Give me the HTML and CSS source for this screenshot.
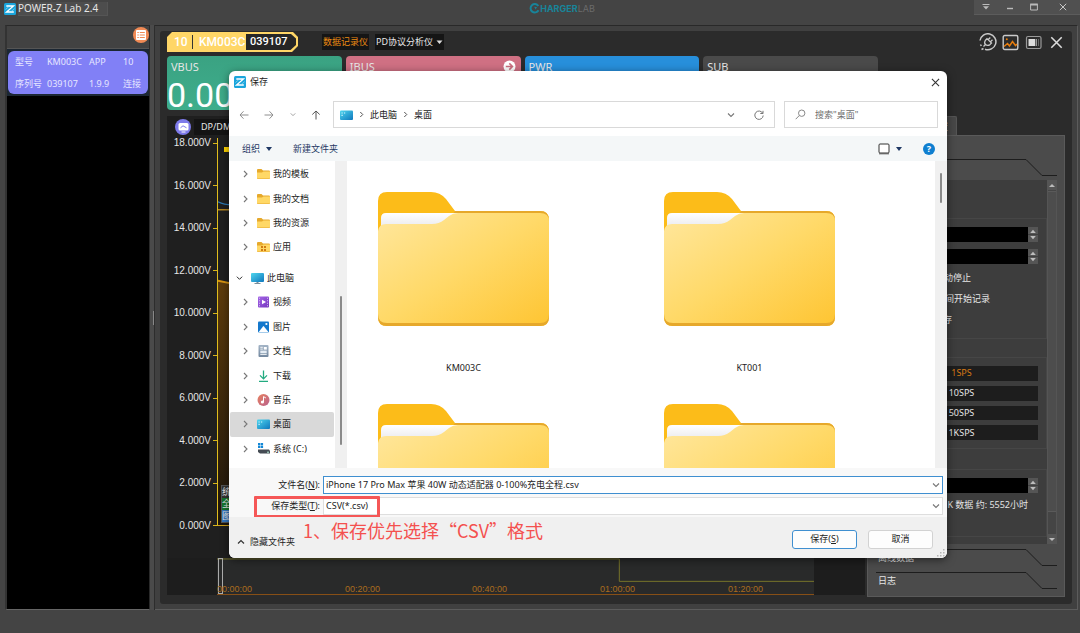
FILE: index.html
```html
<!DOCTYPE html>
<html lang="zh-CN">
<head>
<meta charset="utf-8">
<meta name="viewport" content="width=device-width, initial-scale=1">
<title>POWER-Z Lab 2.4</title>
<link rel="stylesheet" href="styles.css">
</head>
<body>
<svg class="defs" width="0" height="0" aria-hidden="true">
  <defs>
    <linearGradient id="g-front" x1="0" y1="0" x2="1" y2="1"><stop offset="0" stop-color="#ffe79e"/><stop offset=".5" stop-color="#ffd968"/><stop offset="1" stop-color="#fec533"/></linearGradient>
    <linearGradient id="g-paper" x1="0" y1="0" x2="0" y2="1"><stop offset="0" stop-color="#fff"/><stop offset=".5" stop-color="#f1f1f3"/><stop offset="1" stop-color="#e4e4ea"/></linearGradient>
    <linearGradient id="g-blue" x1="0" y1="0" x2="1" y2="1"><stop offset="0" stop-color="#4fd6ee"/><stop offset="1" stop-color="#0f77bd"/></linearGradient>
    <linearGradient id="g-purple" x1="0" y1="0" x2="1" y2="1"><stop offset="0" stop-color="#a566e8"/><stop offset="1" stop-color="#7436bd"/></linearGradient>
    <linearGradient id="g-music" x1="0" y1="0" x2="1" y2="1"><stop offset="0" stop-color="#e8825f"/><stop offset="1" stop-color="#b9618d"/></linearGradient>
    <linearGradient id="g-doc" x1="0" y1="0" x2="0" y2="1"><stop offset="0" stop-color="#a3b4c6"/><stop offset="1" stop-color="#73889f"/></linearGradient>
    <symbol id="z-logo" viewBox="0 0 12 12"><rect width="12" height="12" rx="1.5" fill="#1aa5dc"/><path d="M2.3 3h7.2L2.5 9h7.3" fill="none" stroke="#fff" stroke-width="1.3"/><path d="M1.5 6.5 5 3.4M7 8.7l3.6-3" stroke="#aee3f7" stroke-width=".6"/></symbol>
    <symbol id="big-folder" viewBox="0 0 171 134">
      <path d="M0 9Q0 0 9 0H53Q62 0 68 7L77 19H162Q171 19 171 28V125Q171 134 162 134H9Q0 134 0 125Z" fill="#fcbc19"/>
      <path d="M77 19H162Q171 19 171 28V125Q171 134 162 134H9Q0 134 0 125V110H160V22H75Z" fill="#e6a82b"/>
      <path d="M3 40V26Q3 21 8 21H80V40Z" fill="url(#g-paper)"/>
      <path d="M0 39Q1 32 8 32H54Q61 32 66 28L71 24Q75 21 80 21H162Q171 21 171 29V122Q171 131 162 131H9Q0 131 0 122Z" fill="url(#g-front)"/>
    </symbol>
    <symbol id="folder" viewBox="0 0 13 12"><path d="M0 2Q0 1 1 1H4.5L6 2.5H11.8Q13 2.5 13 3.6V10Q13 11 12 11H1Q0 11 0 10Z" fill="#e6a92c"/><path d="M0 4.6H5L6.5 3.5H13V9.6Q13 10.6 12 10.6H1Q0 10.6 0 9.6Z" fill="#ffd866"/></symbol>
    <symbol id="apps" viewBox="0 0 13 12"><use href="#folder"/><path d="M4 5h2v2H4zM7 5h2v2H7zM4 8h2v2H4zM7 8h2v2H7z" fill="#d17b13"/></symbol>
    <symbol id="pc" viewBox="0 0 13 12"><rect y="1" width="13" height="9" rx="1" fill="url(#g-blue)"/><path d="M5.5 10h2v1h2v1h-6v-1h2z" fill="#7a8f9d"/></symbol>
    <symbol id="desktop" viewBox="0 0 13 12"><rect y="1.5" width="13" height="9.5" rx="1" fill="url(#g-blue)"/><path d="M1.5 3.4h1.2v1.2H1.5zM1.5 5.8h1.2V7H1.5zM4 3.4h1.2v1.2H4z" fill="#d7f6ff"/></symbol>
    <symbol id="video" viewBox="0 0 13 12"><rect x="1" y=".5" width="11" height="11" rx="1" fill="url(#g-purple)"/><path d="M2 1.7h1v1H2zM2 4.2h1v1H2zM2 6.7h1v1H2zM2 9.2h1v1H2zM10 1.7h1v1h-1zM10 4.2h1v1h-1zM10 6.7h1v1h-1zM10 9.2h1v1h-1z" fill="#d9bff5"/><path d="M5 3.8 9 6 5 8.2z" fill="#fff"/></symbol>
    <symbol id="image" viewBox="0 0 13 12"><rect x="1" y=".5" width="11" height="11" rx="1" fill="#1478cc"/><path d="M1.5 11.3 6 5.4Q6.5 4.8 7 5.4L11.6 11.3z" fill="#fff"/><circle cx="9.4" cy="3" r="1.1" fill="#fff"/></symbol>
    <symbol id="doc" viewBox="0 0 13 12"><rect x="1.5" y="0" width="10" height="12" rx="1" fill="url(#g-doc)"/><path d="M3.3 2.3h2.5M3.3 4.1h2.5M3.3 9.4h6.4" stroke="#fff" stroke-width=".9"/><rect x="6.8" y="2" width="3" height="2.6" fill="#fff"/><rect x="3.3" y="5.6" width="6.4" height="2.6" fill="#e5edf5"/></symbol>
    <symbol id="down" viewBox="0 0 13 12"><path d="M6.5.5V8.6M3 5.4l3.5 3.5L10 5.4M2 11.3H11" fill="none" stroke="#22ab80" stroke-width="1.3"/></symbol>
    <symbol id="music" viewBox="0 0 13 12"><circle cx="6.5" cy="6" r="6" fill="url(#g-music)"/><circle cx="5.4" cy="8" r="1.6" fill="#fff"/><path d="M6.5 8V2.6L8.9 4" fill="none" stroke="#fff"/></symbol>
    <symbol id="disk" viewBox="0 0 13 12"><path d="M1 0h2.3v2.3H1zM3.8 0h2.3v2.3H3.8zM1 2.8h2.3v2.3H1zM3.8 2.8h2.3v2.3H3.8z" fill="#1387d6"/><path d="M1 6.500h11l1 1.500v2.500H3L1 9z" fill="#454c54"/><path d="M10 9.200h2" stroke="#b9f3da"/></symbol>
    <symbol id="chev" viewBox="0 0 6 8"><path d="M1.5 1l3 3-3 3" fill="none" stroke="currentColor" stroke-width="1.1"/></symbol>
    <symbol id="vee" viewBox="0 0 8 6"><path d="M1 1.5l3 3 3-3" fill="none" stroke="currentColor" stroke-width="1.1"/></symbol>
    <symbol id="cross" viewBox="0 0 10 10"><path d="M1 1l8 8M9 1l-8 8" stroke="currentColor" stroke-width="1.2"/></symbol>
    <symbol id="spin" viewBox="0 0 10 15"><rect width="10" height="15" fill="#555"/><path d="M2.2 6 5 2.8 7.800 6zM2.200 9 5 12.200 7.800 9z" fill="#bdbdbd"/><path d="M0 7.500h10" stroke="#333" stroke-width=".6"/></symbol>
  </defs>
</svg>

<div class="app">
  <header class="titlebar">
    <div class="app-name"><svg width="12" height="12"><use href="#z-logo"/></svg><h1>POWER-Z Lab 2.4</h1></div>
    <div class="brand"><svg width="11" height="11" viewBox="0 0 11 11"><path d="M9.300 3A4.200 4.200 0 1 0 9.500 7.200" fill="none" stroke="#18849a" stroke-width="2"/><path d="M5.200 3.700 8 3.900 6.600 6.500" fill="#18849a"/></svg><span><b>HARGER</b>LAB</span></div>
    <div class="win-buttons">
      <button aria-label="菜单"><svg width="8" height="8" viewBox="0 0 8 8"><path d="M.5 1.500h7" stroke="#bbb"/><path d="M1 3.200h6L4 6.500z" fill="#bbb"/></svg></button>
      <button aria-label="最小化"><svg width="8" height="8" viewBox="0 0 8 8"><path d="M1 5.500h6" stroke="#bbb" stroke-width="1.400"/></svg></button>
      <button aria-label="最大化"><svg width="8" height="8" viewBox="0 0 8 8"><path d="M.6 1.500h6.800v5.500H.6z" fill="none" stroke="#bbb"/><path d="M.2 1.500h7.600" stroke="#bbb" stroke-width="2"/></svg></button>
      <button aria-label="关闭"><svg width="8" height="8"><use href="#cross"/></svg></button>
    </div>
  </header>

  <div class="workspace">
    <aside class="sidebar">
      <div class="side-head">
        <button class="round list-btn" aria-label="设备列表"><svg width="10" height="10" viewBox="0 0 10 10"><rect width="10" height="10" rx="1" fill="#fff"/><path d="M1.300 2.500h1.500M3.800 2.500h5M1.300 5h1.500M3.800 5h5M1.300 7.500h1.500M3.800 7.500h5" stroke="#f08a55"/></svg></button>
      </div>
      <div class="device-wrap">
        <div class="device">
          <span>型号</span><span>KM003C</span><span>APP</span><span>10</span>
          <span>序列号</span><span>039107</span><span>1.9.9</span><span>连接</span>
        </div>
      </div>
    </aside>
    <div class="splitter"></div>

    <main class="frame">
      <section class="panel">
        <div class="panel-head">
          <div class="badge">
            <svg class="badge-shape" viewBox="0 0 131 20" preserveAspectRatio="none"><path d="M5 0H126L131 5V14L125 20H0V5Z" fill="#ffd667"/><path d="M79 2H124L129 6.500V13L123.500 18H79Z" fill="#262626"/></svg>
            <span class="badge-id">10</span><span class="badge-model">KM003C</span><span class="badge-serial">039107</span>
          </div>
          <button class="dark-btn on">数据记录仪</button>
          <button class="dark-btn">PD协议分析仪<svg width="7" height="5" viewBox="0 0 7 5"><path d="M.5.500h6L3.500 4z" fill="#ddd"/></svg></button>
          <div class="tools">
            <button aria-label="连接"><svg width="18" height="18" viewBox="0 0 18 18" fill="none" stroke="#c9c9c9" stroke-width="1.500"><path d="M1 7.500A8 8 0 1 1 6 16.200M4.500 15.500 2.500 16.500M1.500 11.500l.8 1.500"/><path d="M4.500 13.500 6.500 11.500M6.300 7.500Q4.800 10 6.500 11.500T10.800 11.800L12.500 10 8 5.600ZM9.300 6.500 11.300 4.500M11.500 8.700 13.500 6.700" stroke-width="1.300"/></svg></button>
            <button aria-label="图表"><svg width="17" height="17" viewBox="0 0 17 17" fill="none"><rect x="1.200" y="1.500" width="14.600" height="14" rx="1.500" stroke="#c9c9c9" stroke-width="1.400"/><path d="M2 12.500 5.500 9.500 7.500 12 10.500 7.500 13.500 11.500 15 10" stroke="#e87d0d" stroke-width="1.500"/><circle cx="4.800" cy="5.200" r="1" fill="#e87d0d"/></svg></button>
            <button aria-label="视图"><svg width="17" height="17" viewBox="0 0 17 17"><rect x="1.500" y="2.500" width="14.500" height="12" rx="1.500" fill="none" stroke="#999" stroke-width="1.200"/><rect x="3.500" y="5" width="6.500" height="7" fill="#ddd"/><path d="M10.500 5h1.500v7h-1.500z" fill="#999"/><path d="M13 5h1v7h-1z" fill="#666"/></svg></button>
            <button aria-label="关闭面板"><svg width="13" height="13"><use href="#cross"/></svg></button>
          </div>
        </div>

        <div class="cards">
          <article class="card vbus"><h2>VBUS</h2><p>0.00</p></article>
          <article class="card ibus"><h2>IBUS</h2><svg width="13" height="13" viewBox="0 0 13 13"><circle cx="6.500" cy="6.500" r="6" fill="#fff"/><path d="M2.800 6.500h6M6.300 3.400l3.200 3.100-3.200 3.100" fill="none" stroke="#c96d7e" stroke-width="1.500"/></svg></article>
          <article class="card pwr"><h2>PWR</h2></article>
          <article class="card sub"><h2>SUB</h2></article>
        </div>

        <div class="content">
          <section class="chart">
            <div class="chart-bar">
              <button class="round wave-btn" aria-label="曲线"><svg width="11" height="11" viewBox="0 0 11 11"><rect x=".5" y="1" width="10" height="7.500" rx="1.500" fill="#fff"/><path d="M2.500 5.800 5 3.800 8.500 5.800" fill="none" stroke="#7e7bea"/><path d="M3.500 10h4" stroke="#fff"/></svg></button>
              <button class="dark-btn dp">DP/DM</button>
            </div>
            <div class="plot-row">
              <ol class="axis">
                <li>18.000V</li><li>16.000V</li><li>14.000V</li><li>12.000V</li><li>10.000V</li><li>8.000V</li><li>6.000V</li><li>4.000V</li><li>2.000V</li><li>0.000V</li>
              </ol>
              <div class="plot">
                <svg class="traces" viewBox="0 0 598 388" preserveAspectRatio="none"><defs><linearGradient id="g-fill" x1="0" y1="0" x2="0" y2="1"><stop offset="0" stop-color="#5e3c0b"/><stop offset="1" stop-color="#1e160c"/></linearGradient></defs><path d="M0 143 14 146 598 146V388H0Z" fill="url(#g-fill)"/><path d="M0 143 14 146 H598" fill="none" stroke="#d99511" stroke-width="2"/><path d="M0 72H598" stroke="#b48522" stroke-width="1.500"/><path d="M0 64Q6 67 14 67H598" fill="none" stroke="#2b78b5" stroke-width="1.200"/><path d="M6 9h6v5H6z" fill="#ffd400"/></svg>
                <div class="tags"><span>统</span><span class="green">全</span><span class="blue">图</span></div>
              </div>
            </div>
            <div class="overview">
              <div class="overview-plot">
                <svg class="traces" viewBox="0 0 598 37" preserveAspectRatio="none"><path d="M0 1H403V24H598" fill="none" stroke="#77742a" vector-effect="non-scaling-stroke"/></svg>
                <span class="handle"></span>
                <div class="times"><span>00:00:00</span><span>00:20:00</span><span>00:40:00</span><span>01:00:00</span><span>01:20:00</span></div>
              </div>
            </div>
          </section>

          <section class="settings">
            <div class="tab">设置</div>
            <div class="settings-body">
              <div class="fold"><svg viewBox="0 0 32 17" width="32" height="17"><path d="M0 .5 H1L17 16.500H32" fill="none" stroke="#1d1d1d"/></svg></div>
              <div class="scroll">
                <div class="groups">
                  <div class="group first">
                    <div class="spin-row"><input type="text" aria-label="时长"><svg width="10" height="15"><use href="#spin"/></svg></div>
                    <div class="spin-row"><input type="text" aria-label="间隔"><svg width="10" height="15"><use href="#spin"/></svg></div>
                    <label class="check"><input type="checkbox">自动停止</label>
                    <label class="check mid"><input type="checkbox">时间开始记录</label>
                    <label class="check short"><input type="checkbox">保存</label>
                  </div>
                  <div class="group rates">
                    <button class="on">1SPS</button><button>10SPS</button><button>50SPS</button><button>1KSPS</button>
                  </div>
                  <div class="group last">
                    <div class="spin-row"><input type="text" aria-label="缓存"><svg width="10" height="15"><use href="#spin"/></svg></div>
                    <p>K 数据 约: 5552小时</p>
                  </div>
                </div>
                <div class="bar"><i class="arrow"></i><i class="thumb"></i><i class="arrow down"></i></div>
              </div>
              <div class="fold closed"><span>离线数据</span><svg viewBox="0 0 32 17" width="32" height="17"><path d="M0 .5 H1L17 16.500H32" fill="none" stroke="#1d1d1d"/></svg></div>
              <div class="fold closed"><span>日志</span><svg viewBox="0 0 32 17" width="32" height="17"><path d="M0 .5 H1L17 16.500H32" fill="none" stroke="#1d1d1d"/></svg></div>
            </div>
          </section>
        </div>
      </section>
    </main>
  </div>
</div>

<div class="dialog" role="dialog" aria-labelledby="dlg-title">
  <div class="dlg-title"><svg width="12" height="12"><use href="#z-logo"/></svg><h2 id="dlg-title">保存</h2><button aria-label="关闭"><svg width="9" height="9"><use href="#cross"/></svg></button></div>
  <nav class="dlg-nav">
    <div class="nav-arrows">
      <button class="dim" aria-label="后退"><svg width="10" height="10" viewBox="0 0 10 10"><path d="M9.500 5H1M4.500 1.300 1 5l3.500 3.700" fill="none" stroke="currentColor"/></svg></button>
      <button class="dim" aria-label="前进"><svg width="10" height="10" viewBox="0 0 10 10"><path d="M.5 5H9M5.500 1.300 9 5 5.500 8.700" fill="none" stroke="currentColor"/></svg></button>
      <button class="dim" aria-label="最近位置"><svg width="6" height="5"><use href="#vee"/></svg></button>
      <button aria-label="向上"><svg width="10" height="10" viewBox="0 0 10 10"><path d="M5 9.500V1M1.300 4.500 5 1l3.700 3.500" fill="none" stroke="currentColor"/></svg></button>
    </div>
    <div class="path"><svg width="13" height="12"><use href="#desktop"/></svg><svg class="sep" width="5" height="7"><use href="#chev"/></svg><a href="#">此电脑</a><svg class="sep" width="5" height="7"><use href="#chev"/></svg><a href="#">桌面</a>
      <button class="push" aria-label="展开"><svg width="8" height="6"><use href="#vee"/></svg></button>
      <button aria-label="刷新"><svg width="10" height="10" viewBox="0 0 10 10"><path d="M8.800 3.400A4.200 4.200 0 1 0 9.200 5.500M9 .8V3.500H6.300" fill="none" stroke="currentColor"/></svg></button>
    </div>
    <div class="search"><svg width="11" height="11" viewBox="0 0 11 11"><circle cx="6.700" cy="4.200" r="3.200" fill="none" stroke="currentColor"/><path d="M4.300 6.500.7 10.200" stroke="currentColor"/></svg><input type="text" aria-label="搜索" placeholder='搜索"桌面"'></div>
  </nav>
  <div class="dlg-tools">
    <button>组织<i class="caret"></i></button><button>新建文件夹</button>
    <button class="view" aria-label="视图"><svg width="12" height="12" viewBox="0 0 12 12"><rect x="1" y="1" width="10" height="9" rx="1" fill="#fff" stroke="#333"/><path d="M1 10.800h10" stroke="#555"/></svg><i class="caret"></i></button>
    <button class="help" aria-label="帮助">?</button>
  </div>
  <div class="dlg-body">
    <ul class="tree">
      <li><svg class="tw"><use href="#chev"/></svg><svg class="ic"><use href="#folder"/></svg>我的模板</li>
      <li><svg class="tw"><use href="#chev"/></svg><svg class="ic"><use href="#folder"/></svg>我的文档</li>
      <li><svg class="tw"><use href="#chev"/></svg><svg class="ic"><use href="#folder"/></svg>我的资源</li>
      <li><svg class="tw"><use href="#chev"/></svg><svg class="ic"><use href="#apps"/></svg>应用</li>
      <li class="root"><svg class="tw"><use href="#vee"/></svg><svg class="ic"><use href="#pc"/></svg>此电脑</li>
      <li><svg class="tw"><use href="#chev"/></svg><svg class="ic"><use href="#video"/></svg>视频</li>
      <li><svg class="tw"><use href="#chev"/></svg><svg class="ic"><use href="#image"/></svg>图片</li>
      <li><svg class="tw"><use href="#chev"/></svg><svg class="ic"><use href="#doc"/></svg>文档</li>
      <li><svg class="tw"><use href="#chev"/></svg><svg class="ic"><use href="#down"/></svg>下载</li>
      <li><svg class="tw"><use href="#chev"/></svg><svg class="ic"><use href="#music"/></svg>音乐</li>
      <li class="sel"><svg class="tw"><use href="#chev"/></svg><svg class="ic"><use href="#desktop"/></svg>桌面</li>
      <li><svg class="tw"><use href="#chev"/></svg><svg class="ic"><use href="#disk"/></svg>系统 (C:)</li>
    </ul>
    <div class="track low"><i></i></div>
    <div class="files">
      <figure><svg><use href="#big-folder"/></svg><figcaption>KM003C</figcaption></figure>
      <figure><svg><use href="#big-folder"/></svg><figcaption>KT001</figcaption></figure>
      <figure><svg><use href="#big-folder"/></svg></figure>
      <figure><svg><use href="#big-folder"/></svg></figure>
    </div>
    <div class="track high"><i></i></div>
  </div>
  <div class="fields">
    <label for="fname">文件名(<u>N</u>):</label>
    <div class="field active"><input id="fname" type="text" value="iPhone 17 Pro Max 苹果 40W 动态适配器 0-100%充电全程.csv"><svg width="8" height="6"><use href="#vee"/></svg></div>
    <label for="ftype">保存类型(<u>T</u>):</label>
    <div class="field"><select id="ftype"><option>CSV(*.csv)</option></select><svg width="8" height="6"><use href="#vee"/></svg></div>
    <span class="mark"></span>
  </div>
  <div class="dlg-foot">
    <button class="hide"><svg width="8" height="6" viewBox="0 0 8 6"><path d="M1 4.500l3-3 3 3" fill="none" stroke="#333" stroke-width="1.200"/></svg>隐藏文件夹</button>
    <p class="note">1、保存优先选择“CSV”格式</p>
    <button class="act primary">保存(<u>S</u>)</button>
    <button class="act">取消</button>
    <svg class="grip" width="8" height="8" viewBox="0 0 8 8"><path d="M6 0h1.500v1.500H6zM3 3h1.500v1.500H3zM6 3h1.500v1.500H6zM0 6h1.500v1.500H0zM3 6h1.500v1.500H3zM6 6h1.500v1.500H6z" fill="#b5b5b5"/></svg>
  </div>
</div>
</body>
</html>
```

FILE: styles.css
```css
* { box-sizing: border-box; }
body {
  margin: 0;
  position: relative;
  min-height: 100vh;
  background: #444;
  color: #e6e6e6;
  font: 9px/12px "Noto Sans", "Noto Sans CJK SC", sans-serif;
}
h1, h2, p, ol, ul, figure { margin: 0; padding: 0; font: inherit; }
ol, ul { list-style: none; }
button, input, select { font: inherit; color: inherit; margin: 0; padding: 0; border: 0; background: none; border-radius: 0; outline: 0; }
button { display: flex; align-items: center; justify-content: center; white-space: nowrap; }
a { color: inherit; text-decoration: none; }
svg { display: block; flex: none; }
.defs { position: absolute; }

.app { display: flex; flex-direction: column; min-height: 100vh; padding-bottom: 23px; }

/* window title */
.titlebar { display: flex; justify-content: space-between; align-items: flex-start; height: 25px; }
.app-name { display: flex; align-items: center; gap: 2px; flex: 1; font-size: 10px; padding: 2px 0 0 4px; }
.app-name h1 { border: 1px solid #555; border-left: 0; border-top: 0; padding: 0 9px 1px 0; background: #4d4d4d; }
.brand { display: flex; align-items: center; height: 17px; padding-left: 40px; font: 9px/12px Inter, sans-serif; color: #6b6b6b; }
.brand b { color: #18849a; }
.win-buttons { flex: 1; display: flex; justify-content: flex-end; color: #ccc; }
.win-buttons button { width: 24px; height: 15px; background: #505050; border-bottom: 1px solid #5c5c5c; }
.win-buttons button:last-child { width: 34px; }

.workspace { flex: 1; display: flex; padding: 0 2px 0 5px; }
.sidebar { width: 145px; display: flex; flex-direction: column; background: #000; border: 1px solid #2a2a2a; border-bottom-color: #666; border-left: 2px solid #333; }
.side-head { height: 23px; background: #424242; display: flex; justify-content: flex-end; border-bottom: 1px solid #555; }
.round { width: 16px; height: 16px; border-radius: 50%; margin-top: 1px; }
.list-btn { background: #f08a55; }
.device-wrap { background: #1c2733; padding: 2px 1px; }
.device {
  display: grid; grid-template-columns: 32px 42px 34px 1fr; row-gap: 10px;
  padding: 5px 0 4px 7px; border-radius: 6px; background: #8180f6; color: #e6e6ff; white-space: nowrap;
}
.splitter { width: 5px; background: #4a4a4a; border-right: 1px solid #2d2d2d; background-image: linear-gradient(#888, #888); background-size: 1px 14px; background-position: 3px 50%; background-repeat: no-repeat; }
.frame { flex: 1; display: flex; min-width: 0; padding: 5px; border: 1px solid #5c5c5c; border-top-color: #292929; border-left: 0; background: #404040; }
.panel { flex: 1; min-width: 0; display: flex; flex-direction: column; padding: 1px 7px 7px 7px; border-radius: 3px; background: #2b2b2b; }

.panel-head { display: flex; align-items: center; height: 20px; gap: 6px; }
.badge { position: relative; display: flex; align-items: center; width: 131px; height: 20px; margin-right: 18px; color: #fff; font: 500 12px/20px Roboto, sans-serif; }
.badge-shape { position: absolute; inset: 0; width: 100%; height: 100%; }
.badge span { position: relative; }
.badge-id { width: 26px; padding-left: 7px; border-right: 1px solid #333; line-height: 14px; }
.badge-model { width: 53px; padding-left: 6px; }
.badge-serial { font-size: 11px; padding-left: 4px; }
.dark-btn { height: 16px; padding: 0 1px; background: #151515; color: #e8e8e8; gap: 3px; }
.dark-btn.on { color: #ec8a12; }
.tools { margin-left: auto; display: flex; gap: 6px; color: #ddd; }
.tools button { width: 17px; height: 17px; }

.cards { display: grid; grid-template-columns: repeat(4, 1fr); gap: 4px; margin-top: 4px; padding-right: 187px; }
.card { display: flex; flex-wrap: wrap; justify-content: space-between; align-items: flex-start; align-content: flex-start; row-gap: 8px; height: 54px; padding: 4px 5px 0 4px; border-radius: 4px; }
.card h2 { font: 11px/13px "Noto Sans", sans-serif; }
.card p { width: 100%; margin-left: -4px; font: 34px/28px Roboto, sans-serif; color: #fff; }
.vbus { background: linear-gradient(#3aa282, #3fae8c); }
.ibus { background: #cf7083; }
.pwr { background: #278fdb; }
.sub { background: #4a4a4a; }

.content { flex: 1; display: flex; gap: 2px; margin-top: 6px; min-height: 0; }
.chart { flex: 1; min-width: 0; display: flex; flex-direction: column; margin-bottom: 2px; background: #1f1f1f; }
.chart-bar { display: flex; align-items: center; gap: 3px; height: 21px; padding-left: 8px; }
.wave-btn { background: #7e7bea; }
.dp { padding: 0 7px; background: #141414; }
.plot-row { flex: 1; display: flex; min-height: 0; padding-bottom: 26px; }
.axis { width: 50px; display: flex; flex-direction: column; justify-content: space-between; font: 10px/12px "Liberation Sans", sans-serif; }
.axis li { display: flex; align-items: center; justify-content: flex-end; gap: 2px; }
.axis li::after { content: ""; width: 4px; height: 1px; background: #d8b51c; }
.plot { position: relative; flex: 1; margin: 1px 51px 6px 0; border-left: 1px solid #e0bd1c; border-bottom: 1px solid #d0a018; }
.traces { position: absolute; inset: 0; width: 100%; height: 100%; }
.tags { position: absolute; left: 3px; bottom: 2px; width: 14px; background: #333; border: 1px solid #555; }
.tags span { display: block; line-height: 12px; }
.tags .green { background: #16762c; }
.tags .blue { background: #3477c2; }
.overview { height: 37px; padding: 0 51px 0 50px; background: #1d1d1d; }
.overview-plot { position: relative; display: flex; align-items: flex-end; height: 37px; background: #292a2a; border-bottom: 1px solid #874f16; }
.handle { position: absolute; left: 1px; top: 0; width: 5px; height: 36px; border: 1px solid #aaa; }
.times { position: relative; display: grid; grid-template-columns: 128fr 127fr 128fr 128fr 86fr; width: 100%; font: 9px/10px "Liberation Sans", sans-serif; color: #aa6c1e; }

.settings { width: 198px; display: flex; flex-direction: column; }
.tab { width: 90px; height: 19px; padding: 4px 8px 0; text-align: right; background: #484848; border: 1px solid #555; border-bottom: 0; border-radius: 2px 2px 0 0; }
.settings-body { flex: 1; display: flex; flex-direction: column; padding: 23px 7px 6px 8px; background: #4b4b4b; border: 1px solid #5a5a5a; }
.fold { display: flex; height: 21px; flex: none; }
.fold::before { content: ""; flex: 1; border-top: 1px solid #1d1d1d; }
.fold.closed { position: relative; margin-top: 5px; height: 18px; }
.fold.closed span { position: absolute; left: 2px; top: 3px; }
.scroll { flex: 1; display: flex; justify-content: space-between; background: #3d3d3d; }
.groups { flex: 1; padding-top: 38px; }
.group { display: flex; flex-direction: column; gap: 5px; padding: 8px; border: 1px solid #464646; }
.group.first { gap: 7px; height: 121px; }
.spin-row { display: flex; flex: none; }
.spin-row input { flex: 1; min-width: 0; height: 15px; background: #000; }
.check { display: flex; flex: none; align-items: center; justify-content: flex-end; gap: 4px; height: 14px; padding-right: 67px; white-space: nowrap; }
.check.mid { padding-right: 48px; }
.check.short { padding-right: 86px; }
.check input { width: 9px; height: 9px; }
.rates { margin-top: 18px; height: 92px; }
.rates button { height: 15px; background: #1d1d1d; }
.rates .on { color: #d87a14; }
.group.last { margin-top: 20px; height: 68px; gap: 6px; }
.group.last p { text-align: right; padding-right: 10px; }
.bar { width: 10px; display: flex; flex-direction: column; background: #454545; border: 1px solid #555; border-width: 0 1px; }
.arrow { height: 10px; background: #555; display: flex; align-items: center; justify-content: center; }
.arrow::before { content: ""; border: 3px solid transparent; border-top: 0; border-bottom: 3px solid #bbb; }
.arrow.down::before { transform: rotate(180deg); }
.thumb { flex: 1; margin: 1px 0 22px; background: #4d4d4d; border: 1px solid #5a5a5a; border-width: 1px 0; }

/* save dialog */
.dialog {
  position: absolute; left: 229px; right: 133px; top: 71px; bottom: 75px;
  display: flex; flex-direction: column; overflow: hidden;
  background: #fff; color: #222; border-radius: 6px; box-shadow: 0 2px 8px rgba(0, 0, 0, .5);
}
.dlg-title { display: flex; align-items: center; gap: 4px; height: 22px; padding: 0 7px 0 5px; }
.dlg-title button { margin-left: auto; color: #333; }
.dlg-nav { display: flex; align-items: center; margin-top: 8px; height: 27px; padding-right: 9px; color: #555; }
.nav-arrows { width: 104px; display: flex; justify-content: space-between; padding: 0 12px 0 10px; }
.dim { color: #8e8e8e; }
.path { flex: 1; display: flex; align-items: center; height: 27px; gap: 8px; padding: 0 10px 0 6px; border: 1px solid #d9d9d9; color: #222; }
.path svg { color: #777; }
.path .sep { margin: 0 -2px; color: #444; }
.path .push { margin: 0 11px 0 auto; }
.search { display: flex; align-items: center; gap: 9px; width: 154px; height: 27px; margin-left: 9px; padding: 0 10px; border: 1px solid #d9d9d9; color: #888; }
.search input { flex: 1; min-width: 0; }
.search input::placeholder { color: #6e6e6e; opacity: 1; }
.dlg-tools { display: flex; align-items: center; height: 25px; margin-top: 8px; padding: 0 12px 0 13px; gap: 21px; background: #f4f7f8; color: #1f3864; }
.dlg-tools button { gap: 6px; }
.caret { border: 3px solid transparent; border-top: 4px solid #1f3864; border-bottom: 0; }
.view { margin-left: auto; }
.dlg-tools .help { width: 12px; height: 12px; border-radius: 50%; background: #0f7fd0; color: #fff; font-weight: 700; }
.dlg-body { flex: 1; display: flex; min-height: 0; }
.tree { width: 106px; display: flex; flex-direction: column; padding: 1px 1px 7px; }
.tree li { flex: 1; display: flex; align-items: center; gap: 3px; padding-left: 12px; white-space: nowrap; border-radius: 2px; }
.tree .root { margin-top: 6px; padding-left: 6px; }
.tree .sel { background: #d9d9d9; }
.tw { width: 7px; height: 8px; margin-right: 5px; color: #777; }
.root .tw { color: #222; }
.ic { width: 13px; height: 12px; }
.track { width: 12px; background: #f0f0f0; display: flex; justify-content: center; }
.track i { width: 2px; background: #8a8a8a; border-radius: 1px; }
.low i { margin: 135px 0 23px; }
.high i { margin: 12px 0 0; height: 30px; }
.files { flex: 1; min-width: 0; display: grid; grid-template-columns: repeat(auto-fill, 171px); gap: 0 115px; align-content: start; padding: 31px 0 0 31px; overflow: hidden; }
.files figure { height: 212px; }
.files svg { width: 171px; height: 134px; }
.files figcaption { margin-top: 36px; text-align: center; }
.fields { position: relative; display: grid; grid-template-columns: 91px 1fr; column-gap: 3px; row-gap: 3px; align-items: center; padding: 8px 4px 2px 0; background: #f8f8f8; }
.fields label { text-align: right; white-space: nowrap; }
.field { display: flex; align-items: center; height: 18px; padding: 0 2px; background: #fff; border: 1px solid #dedede; }
.field.active { border-color: #3f8fd0; }
.field input, .field select { flex: 1; min-width: 0; appearance: none; }
.field svg { color: #777; }
.mark { position: absolute; left: 25px; width: 126px; top: 28px; height: 22px; border: 3px solid #f55757; border-radius: 1px; }
.dlg-foot { position: relative; display: flex; align-items: center; justify-content: flex-end; gap: 11px; height: 41px; padding: 3px 14px 0 8px; background: #f0f0f0; }
.hide { gap: 5px; margin-right: auto; padding-top: 5px; }
.note { position: absolute; left: 74px; top: 1px; font: 18px/24px "Noto Sans CJK SC", sans-serif; color: #f4514f; white-space: nowrap; }
.act { width: 65px; height: 19px; border: 1px solid #d2d2d2; border-radius: 3px; background: #fdfdfd; }
.act.primary { border-color: #3f8fd0; }
.grip { position: absolute; right: 2px; bottom: 1px; }
```
